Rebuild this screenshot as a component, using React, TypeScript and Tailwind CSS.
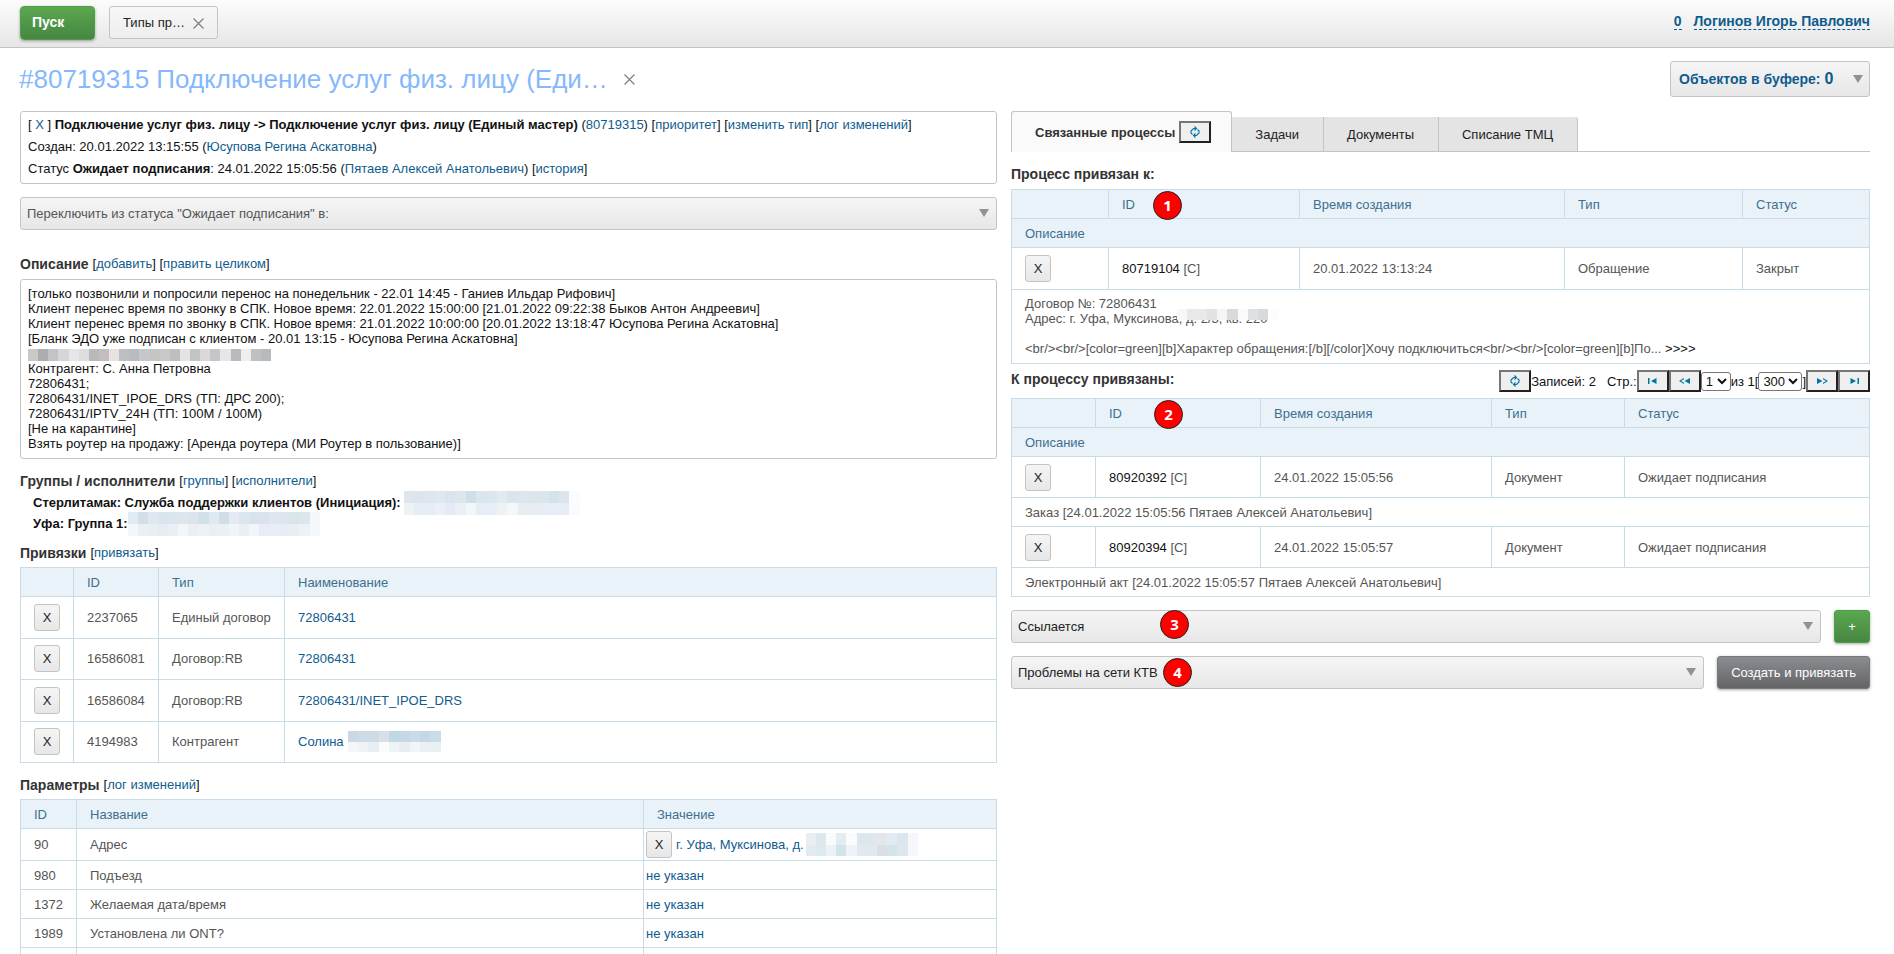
import type { ReactNode } from "react";

const LINK = "text-[#0f5c8e] no-underline";
const CELL = "border border-[#c8dce8] px-[13px] text-left font-normal";
const FIELD = "h-[33px] w-full appearance-none rounded-[3px] border border-[#c4c4c4] bg-linear-to-b from-[#f5f5f5] to-[#e7e7e7] pl-1.5 pr-6";

function Link({ children }: { children: ReactNode }) {
    return <a href="#" className={LINK}>{children}</a>;
}

function DeleteButton() {
    return (
        <button className="h-[27px] w-[26px] shrink-0 rounded-[3px] border border-[#c4c4c4] bg-linear-to-b from-[#f5f5f5] to-[#e7e7e7] text-center text-[#222]">
            X
        </button>
    );
}

function Arrow({ className = "" }: { className?: string }) {
    return (
        <svg className={"pointer-events-none " + className} width="10" height="8" viewBox="0 0 10 8" aria-hidden="true">
            <path d="M0 0h10L5 8z" fill="#919191" />
        </svg>
    );
}

function Dropdown({ label, value, className }: { label: string; value: string; className: string }) {
    return (
        <div className="relative min-w-0 flex-1">
            <select aria-label={label} className={FIELD + " " + className}>
                <option>{value}</option>
            </select>
            <Arrow className="absolute right-2 top-3" />
        </div>
    );
}

function Cross() {
    return (
        <svg width="11" height="11" viewBox="0 0 11 11" stroke="#7a7a7a" strokeWidth="1.1" aria-hidden="true">
            <path d="M.5.5l10 10M10.5.5l-10 10" />
        </svg>
    );
}

function ToolButton({ label, children }: { label: string; children: ReactNode }) {
    return (
        <button
            aria-label={label}
            className="flex h-[22px] w-8 shrink-0 items-center justify-center border-2 border-t-[#767676] border-l-[#767676] border-r-[#212121] border-b-[#212121] bg-[#efefef] text-[#0073a8]"
        >
            {children}
        </button>
    );
}

function RefreshIcon() {
    return (
        <svg width="10" height="12" viewBox="0 0 10 12" fill="none" stroke="currentColor" strokeWidth="1.1" aria-hidden="true">
            <path d="M6 2.500H3.500L1 5v2l1.500 1.500M4.500.5l2 2-2 2" />
            <path d="M4 9.500h2.500L9 7V5L7.500 3.500M5.500 7.500l-2 2 2 2" />
        </svg>
    );
}

function Badge({ n, className }: { n: number; className: string }) {
    return (
        <span
            className={
                "absolute flex size-[29px] items-center justify-center rounded-full border border-[#222] bg-[#f00] font-['Open_Sans',sans-serif] text-[15px] leading-none font-bold text-white " +
                className
            }
        >
            {n}
        </span>
    );
}

// hidden personal data, drawn as a strip of coloured squares
function Mosaic({ rows, className }: { rows: string[][]; className: string }) {
    return (
        <span className={"inline-flex shrink-0 flex-col " + className} aria-hidden="true">
            {rows.map((row, i) => (
                <span key={i} className="flex flex-1">
                    {row.map((color, j) => (
                        <span key={j} className="flex-1" style={{ backgroundColor: color }} />
                    ))}
                </span>
            ))}
        </span>
    );
}

const MOSAIC_NOTE = [
    ["#cdc8c8", "#abadb1", "#c3c3c5", "#d6d6d8", "#e6e6e8", "#dedee0", "#b9b9ba", "#c2bebf", "#e8e2e1", "#bdbfc2", "#b9bcbf", "#c5c7ca", "#c4c6c5", "#c8c9c8", "#bdc0be", "#e3e3e5", "#c0c4c4", "#dcd8d7", "#c6c6c8", "#e4e6ea", "#b9b9bb", "#eceef0", "#c0c0c2", "#b7babd"],
];
const MOSAIC_GROUP = [
    ["#dde6ee", "#dce5ed", "#dde6ed", "#dfe8ee", "#d9e4ec", "#dbe6ed", "#cfdfe8", "#dbe6ec", "#dbe6ed", "#e2e9f1", "#d8e5eb", "#dde5ef", "#dce5ee", "#d9e6eb", "#d4e3e9", "#dae6eb", "#fbfcfe"],
    ["#edf2f5", "#e7eef3", "#e5ecf4", "#eaf0f5", "#e5eaf5", "#eaf1f5", "#f2f7f9", "#e7edf6", "#e8eef5", "#edf2f5", "#f4f8fa", "#e7eef2", "#e6edf2", "#e6edf3", "#e8edf6", "#e6ebf5", "#f9fcfd"],
];
const MOSAIC_USER = [
    ["#e3ebf2", "#d2dfe8", "#dfe8ef", "#d9e4ec", "#d9e7ed", "#dee6ed", "#dde4ed", "#d1e1e9", "#e0e8f0", "#d0dfe7", "#e3eaf2", "#dde5ee", "#d8e4ec", "#dae3ed", "#dfe6ef", "#dde5ef", "#d9e5eb", "#dce7ed", "#f5f8fb"],
    ["#f3f7fa", "#e9eff3", "#e8eff3", "#e7ecf3", "#e8eff5", "#f3f7fa", "#e9eff4", "#edf2f6", "#e8f0f3", "#eaf0f4", "#f0f5f9", "#e9eff3", "#f2f6f9", "#e7ecf6", "#e8edf6", "#e7ecf5", "#e8eff4", "#edf3f5", "#f5f8fb"],
];
const MOSAIC_NAME = [
    ["#cbd7e2", "#cbdce5", "#cddbe5", "#dadfe7", "#c1d7e6", "#c6d8e6", "#cbdae5", "#c4d7e5", "#cadde6"],
    ["#f4f6f8", "#f0f3f6", "#e8eff4", "#fafcfc", "#eef3f6", "#e7edf1", "#f0f5f7", "#eaf0f4", "#e9f0f3"],
];
const MOSAIC_ADDRESS = [
    ["#e8eef2", "#dce7ee", "#f8fafc", "#e5ecf1", "#fafbfd", "#dbe7ed", "#dee7ec", "#e3e7ea", "#e4eaf2", "#dce6ef", "#f5f7fa"],
    ["#e3ebf0", "#dce9ef", "#edf2f6", "#d1e3eb", "#f0f3f6", "#e1e9f0", "#e0e9f0", "#dbdfe4", "#d3e4eb", "#dde6ec", "#f5f7fa"],
];
const MOSAIC_FLAT = [
    ["#f6f7f9", "#e8e8e8", "#e9e9ea", "#e1e2e2", "#f3f5f7", "#d9d9da", "#f8fafc", "#dfe0e1", "#d8d9da", "#fdfdfe"],
];

const bindings = [
    { id: "2237065", type: "Единый договор", name: "72806431" },
    { id: "16586081", type: "Договор:RB", name: "72806431" },
    { id: "16586084", type: "Договор:RB", name: "72806431/INET_IPOE_DRS" },
    { id: "4194983", type: "Контрагент", name: "Солина", hidden: true },
];

const params = [
    { id: "980", name: "Подъезд" },
    { id: "1372", name: "Желаемая дата/время" },
    { id: "1989", name: "Установлена ли ONT?" },
];

const children = [
    { id: "80920392", time: "24.01.2022 15:05:56", text: "Заказ [24.01.2022 15:05:56 Пятаев Алексей Анатольевич]" },
    { id: "80920394", time: "24.01.2022 15:05:57", text: "Электронный акт [24.01.2022 15:05:57 Пятаев Алексей Анатольевич]" },
];

function Heading({ title, children }: { title: string; children?: ReactNode }) {
    return (
        <div className="flex items-center gap-1 leading-5">
            <h2 className="text-[14px] font-bold text-[#333]">{title}</h2>
            {children && <span>{children}</span>}
        </div>
    );
}

function ProcessHead() {
    return (
        <thead className="bg-[#e9f2f9] text-[#3e6f8f]">
            <tr className="h-[29px]">
                <td className={CELL}></td>
                <th className={CELL}>ID</th>
                <th className={CELL}>Время создания</th>
                <th className={CELL}>Тип</th>
                <th className={CELL}>Статус</th>
            </tr>
            <tr className="h-[29px]">
                <th colSpan={5} className={CELL}>Описание</th>
            </tr>
        </thead>
    );
}

function LeftColumn() {
    return (
        <section className="min-w-0">
            <div className="rounded-[3px] border border-[#c4c4c4] px-[7px] pt-0.5 pb-[3px] leading-[22px]">
                <p>
                    [ <Link>X</Link> ] <b>Подключение услуг физ. лицу -&gt; Подключение услуг физ. лицу (Единый мастер)</b> (<Link>80719315</Link>) [<Link>приоритет</Link>] [<Link>изменить тип</Link>] [<Link>лог изменений</Link>]
                </p>
                <p>Создан: 20.01.2022 13:15:55 (<Link>Юсупова Регина Аскатовна</Link>)</p>
                <p>Статус <b>Ожидает подписания</b>: 24.01.2022 15:05:56 (<Link>Пятаев Алексей Анатольевич</Link>) [<Link>история</Link>]</p>
            </div>
            <div className="mt-[13px] flex">
                <Dropdown label="Статус" value={'Переключить из статуса "Ожидает подписания" в:'} className="text-[#555]" />
            </div>

            <div className="mt-6">
                <Heading title="Описание">[<Link>добавить</Link>] [<Link>править целиком</Link>]</Heading>
            </div>
            <div className="mt-[5px] rounded-[3px] border border-[#c4c4c4] px-[7px] pt-1.5 pb-[7px] leading-[15px]">
                <p>[только позвонили и попросили перенос на понедельник - 22.01 14:45 - Ганиев Ильдар Рифович]</p>
                <p>Клиент перенес время по звонку в СПК. Новое время: 22.01.2022 15:00:00 [21.01.2022 09:22:38 Быков Антон Андреевич]</p>
                <p>Клиент перенес время по звонку в СПК. Новое время: 21.01.2022 10:00:00 [20.01.2022 13:18:47 Юсупова Регина Аскатовна]</p>
                <p>[Бланк ЭДО уже подписан с клиентом - 20.01 13:15 - Юсупова Регина Аскатовна]</p>
                <p className="flex h-[15px] items-end"><Mosaic rows={MOSAIC_NOTE} className="h-3 w-[243px]" /></p>
                <p>Контрагент: С. Анна Петровна</p>
                <p>72806431;</p>
                <p>72806431/INET_IPOE_DRS (ТП: ДРС 200);</p>
                <p>72806431/IPTV_24H (ТП: 100М / 100М)</p>
                <p>[Не на карантине]</p>
                <p>Взять роутер на продажу: [Аренда роутера (МИ Роутер в пользование)]</p>
            </div>

            <div className="mt-3">
                <Heading title="Группы / исполнители">[<Link>группы</Link>] [<Link>исполнители</Link>]</Heading>
                <div className="pt-px pl-[13px] font-bold">
                    <p className="flex h-[21px] items-center gap-[3px]">
                        Стерлитамак: Служба поддержки клиентов (Инициация):
                        <Mosaic rows={MOSAIC_GROUP} className="h-6 w-[176px]" />
                    </p>
                    <p className="flex h-[21px] items-center">
                        Уфа: Группа 1:
                        <Mosaic rows={MOSAIC_USER} className="h-6 w-48" />
                    </p>
                </div>
            </div>

            <div className="mt-[9px]">
                <Heading title="Привязки">[<Link>привязать</Link>]</Heading>
            </div>
            <table className="mt-1 h-[196px] w-full border-collapse text-[#555]">
                <thead className="bg-[#e9f2f9] text-[#3e6f8f]">
                    <tr className="h-[29px]">
                        <td className={CELL + " w-[53px]"}></td>
                        <th className={CELL + " w-[85px]"}>ID</th>
                        <th className={CELL + " w-[126px]"}>Тип</th>
                        <th className={CELL}>Наименование</th>
                    </tr>
                </thead>
                <tbody>
                    {bindings.map((row) => (
                        <tr key={row.id}>
                            <td className={CELL}><DeleteButton /></td>
                            <td className={CELL}>{row.id}</td>
                            <td className={CELL + " whitespace-nowrap"}>{row.type}</td>
                            <td className={CELL}>
                                <span className="flex items-center gap-1">
                                    <Link>{row.name}</Link>
                                    {row.hidden && <Mosaic rows={MOSAIC_NAME} className="h-[21px] w-[93px]" />}
                                </span>
                            </td>
                        </tr>
                    ))}
                </tbody>
            </table>

            <div className="mt-3">
                <Heading title="Параметры">[<Link>лог изменений</Link>]</Heading>
            </div>
            <table className="mt-1 w-full border-collapse text-[#555]">
                <thead className="bg-[#e9f2f9] text-[#3e6f8f]">
                    <tr className="h-[29px]">
                        <th className={CELL + " w-14"}>ID</th>
                        <th className={CELL}>Название</th>
                        <th className={CELL + " w-[353px]"}>Значение</th>
                    </tr>
                </thead>
                <tbody>
                    <tr className="h-8">
                        <td className={CELL}>90</td>
                        <td className={CELL}>Адрес</td>
                        <td className="border border-[#c8dce8] px-0.5">
                            <span className="flex items-center">
                                <DeleteButton />
                                <a href="#" className={LINK + " ml-1"}>г. Уфа, Муксинова, д.</a>
                                <Mosaic rows={MOSAIC_ADDRESS} className="ml-0.5 h-[23px] w-28" />
                            </span>
                        </td>
                    </tr>
                    {params.map((row) => (
                        <tr key={row.id} className="h-[29px]">
                            <td className={CELL}>{row.id}</td>
                            <td className={CELL}>{row.name}</td>
                            <td className="border border-[#c8dce8] px-0.5"><Link>не указан</Link></td>
                        </tr>
                    ))}
                    <tr className="h-[29px]">
                        <td className={CELL}></td>
                        <td className={CELL}></td>
                        <td className={CELL}></td>
                    </tr>
                </tbody>
            </table>
        </section>
    );
}

function RightColumn() {
    const tab = "h-[34px] border-r border-[#c4c4c4] bg-[#e4e4e4] pl-[23px] pr-6 text-[#222]";
    return (
        <section className="min-w-0">
            <div className="flex h-[41px] items-end border-b border-[#c4c4c4]">
                <div className="-mb-px flex h-[41px] items-center gap-1 rounded-t-[3px] border border-b-0 border-[#c4c4c4] bg-[#fafafa] pr-5 pl-[23px]">
                    <a href="#" className="font-bold text-[#333]">Связанные процессы</a>
                    <ToolButton label="Обновить"><RefreshIcon /></ToolButton>
                </div>
                <button className={tab}>Задачи</button>
                <button className={tab}>Документы</button>
                <button className={tab + " rounded-tr-[3px]"}>Списание ТМЦ</button>
            </div>

            <div className="mt-3">
                <Heading title="Процесс привязан к:" />
            </div>
            <div className="relative mt-[5px]">
                <table className="w-full table-fixed border-collapse text-[#555]">
                    <colgroup>
                        <col className="w-[97px]" />
                        <col className="w-[191px]" />
                        <col className="w-[265px]" />
                        <col className="w-[178px]" />
                        <col />
                    </colgroup>
                    <ProcessHead />
                    <tbody>
                        <tr className="h-[42px]">
                            <td className={CELL}><DeleteButton /></td>
                            <td className={CELL}><a href="#" className="text-[#111]">80719104</a> [C]</td>
                            <td className={CELL}>20.01.2022 13:13:24</td>
                            <td className={CELL}>Обращение</td>
                            <td className={CELL}>Закрыт</td>
                        </tr>
                        <tr>
                            <td colSpan={5} className={CELL + " pt-1.5 pb-[7px] leading-[15px]"}>
                                <p>Договор №: 72806431</p>
                                <p className="relative">
                                    Адрес: г. Уфа, Муксинова, д. 2/3, кв. 220
                                    <Mosaic rows={MOSAIC_FLAT} className="absolute -top-0.5 left-[152px] h-[11px] w-[101px]" />
                                </p>
                                <p className="mt-[15px]">
                                    &lt;br/&gt;&lt;br/&gt;[color=green][b]Характер обращения:[/b][/color]Хочу подключиться&lt;br/&gt;&lt;br/&gt;[color=green][b]По... <a href="#" className="text-[#111]">&gt;&gt;&gt;&gt;</a>
                                </p>
                            </td>
                        </tr>
                    </tbody>
                </table>
                <Badge n={1} className="top-0.5 left-[142px]" />
            </div>

            <div className="mt-1.5 flex h-[22px] items-center justify-between">
                <div className="-mt-1"><Heading title="К процессу привязаны:" /></div>
                <div className="flex items-center whitespace-pre">
                    <ToolButton label="Обновить"><RefreshIcon /></ToolButton>
                    <span>Записей: 2   Стр.:</span>
                    <ToolButton label="Первая">
                        <svg width="9" height="6" viewBox="0 0 9 6" fill="currentColor"><path d="M0 0h1.500v6H0zM8.500 0v6L3 3z" /></svg>
                    </ToolButton>
                    <ToolButton label="Назад">
                        <svg width="11" height="6" viewBox="0 0 11 6" fill="currentColor"><path d="M11 0v6L5.500 3zM5 0v1.200L2 3l3 1.800V6L0 3z" /></svg>
                    </ToolButton>
                    <select aria-label="Страница" className="h-[19px] w-[30px] rounded-[3px] border border-[#767676] bg-white">
                        <option>1</option>
                    </select>
                    <span>из 1[</span>
                    <select aria-label="Записей на странице" className="h-[19px] w-11 rounded-[3px] border border-[#767676] bg-white">
                        <option>300</option>
                    </select>
                    <span>]</span>
                    <ToolButton label="Вперед">
                        <svg width="11" height="6" viewBox="0 0 11 6" fill="currentColor"><path d="M0 0v6l5.500-3zM6 0v1.200L9 3 6 4.800V6l5-3z" /></svg>
                    </ToolButton>
                    <ToolButton label="Последняя">
                        <svg width="9" height="6" viewBox="0 0 9 6" fill="currentColor"><path d="M7.500 0H9v6H7.500zM.5 0v6L6 3z" /></svg>
                    </ToolButton>
                </div>
            </div>

            <div className="relative mt-1.5">
                <table className="h-[199px] w-full table-fixed border-collapse text-[#555]">
                    <colgroup>
                        <col className="w-[84px]" />
                        <col className="w-[165px]" />
                        <col className="w-[231px]" />
                        <col className="w-[133px]" />
                        <col />
                    </colgroup>
                    <ProcessHead />
                    {children.map((row) => (
                        <tbody key={row.id}>
                            <tr className="h-[41px]">
                                <td className={CELL}><DeleteButton /></td>
                                <td className={CELL}><a href="#" className="text-[#111]">{row.id}</a> [C]</td>
                                <td className={CELL}>{row.time}</td>
                                <td className={CELL}>Документ</td>
                                <td className={CELL}>Ожидает подписания</td>
                            </tr>
                            <tr className="h-[29px]">
                                <td colSpan={5} className={CELL}>{row.text}</td>
                            </tr>
                        </tbody>
                    ))}
                </table>
                <Badge n={2} className="top-0.5 left-[143px]" />
            </div>

            <div className="relative mt-[13px] flex gap-[13px]">
                <Dropdown label="Тип связи" value="Ссылается" className="text-[#222]" />
                <button className="h-[33px] w-9 rounded-[3px] border border-[#4aa342] bg-linear-to-b from-[#5aa84f] to-[#478643] text-white shadow-[0_1px_3px_rgba(0,0,0,0.35)]">+</button>
                <Badge n={3} className="top-0 left-[149px]" />
            </div>
            <div className="relative mt-[13px] flex gap-[13px]">
                <Dropdown label="Тип процесса" value="Проблемы на сети КТВ" className="text-[#222]" />
                <button className="h-[33px] rounded-[3px] border border-[#77787b] bg-linear-to-b from-[#8b8d92] to-[#646466] px-[13px] text-white shadow-[0_1px_3px_rgba(0,0,0,0.35)]">Создать и привязать</button>
                <Badge n={4} className="top-0.5 left-[152px]" />
            </div>
        </section>
    );
}

function App() {
    return (
        <div className="h-screen overflow-hidden bg-white font-['Liberation_Sans',Arial,sans-serif] text-[13px] leading-[15px] text-[#111]">
            <header className="flex h-12 items-start justify-between border-b border-[#c4c4c4] bg-linear-to-b from-[#fcfcfc] to-[#e6e6e6] pt-1.5 pr-6 pl-5">
                <div className="flex gap-3.5">
                    <button className="h-[34px] w-[75px] rounded-[4px] border border-[#4aa342] bg-linear-to-b from-[#5aa84f] to-[#478643] pb-0.5 pl-[11px] text-left text-[14px] font-bold text-white shadow-[0_1px_3px_rgba(0,0,0,0.35)]">
                        Пуск
                    </button>
                    <div className="flex h-[33px] w-[109px] items-center justify-between rounded-[3px] border border-[#c4c4c4] bg-linear-to-b from-[#f7f7f7] to-[#eee] px-[13px]">
                        <a href="#" className="text-[#222]">Типы пр…</a>
                        <button aria-label="Закрыть вкладку" className="pt-0.5"><Cross /></button>
                    </div>
                </div>
                <div className="mt-[7px] flex gap-3 text-[14px] leading-4 font-bold text-[#0f5c8e]">
                    <a href="#" className="border-b border-dashed border-[#0f5c8e]">0</a>
                    <a href="#" className="border-b border-dashed border-[#0f5c8e]">Логинов Игорь Павлович</a>
                </div>
            </header>

            <div className="flex items-center justify-between pt-[13px] pr-6 pl-[19px]">
                <div className="flex items-center gap-4">
                    <h1 className="text-[26px] leading-9 text-[#85b8fc]">#80719315 Подключение услуг физ. лицу (Еди…</h1>
                    <button aria-label="Закрыть"><Cross /></button>
                </div>
                <button className="flex h-9 w-[200px] items-center justify-between rounded-[3px] border border-[#c4c4c4] bg-linear-to-b from-[#f5f5f5] to-[#e7e7e7] pr-1.5 pl-2 text-[14px] font-bold text-[#0f5c8e]">
                    <span>Объектов в буфере: <span className="text-[16px]">0</span></span>
                    <Arrow />
                </button>
            </div>

            <main className="grid grid-cols-[977fr_859fr] gap-3.5 pt-3.5 pr-6 pl-5">
                <LeftColumn />
                <RightColumn />
            </main>
        </div>
    );
}

export default App;
